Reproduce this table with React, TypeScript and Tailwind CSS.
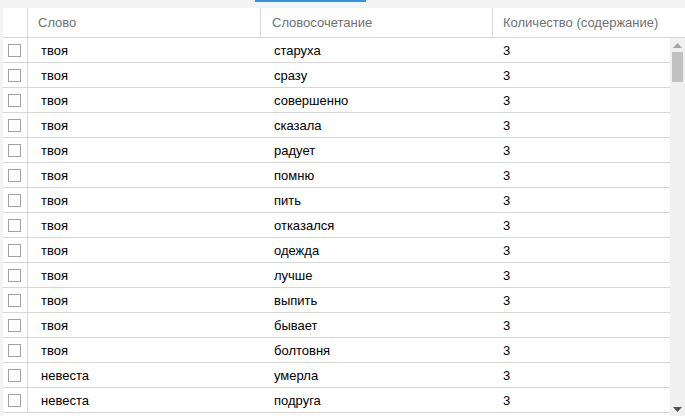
import React from "react";

const rows: [string, string, number][] = [
  ["твоя", "старуха", 3],
  ["твоя", "сразу", 3],
  ["твоя", "совершенно", 3],
  ["твоя", "сказала", 3],
  ["твоя", "радует", 3],
  ["твоя", "помню", 3],
  ["твоя", "пить", 3],
  ["твоя", "отказался", 3],
  ["твоя", "одежда", 3],
  ["твоя", "лучше", 3],
  ["твоя", "выпить", 3],
  ["твоя", "бывает", 3],
  ["твоя", "болтовня", 3],
  ["невеста", "умерла", 3],
  ["невеста", "подруга", 3],
];

const App = () => {
  return (
    <div
      className="w-[685px] h-[416px] overflow-hidden bg-[#f3f3f3] text-[13px]"
      style={{ fontFamily: '"Liberation Sans", Arial, sans-serif' }}
    >
      {/* tab indicator */}
      <div className="ml-[255px] w-[111px] h-[2px] bg-[#3a92dc]" />
      <div className="h-[6px]" />

      <div className="ml-[3px] bg-white">
        {/* header */}
        <div className="grid grid-cols-[24px_233px_232px_1fr] h-[30px] border-b border-[#d6d6d6] text-[#707070]">
          <div />
          <div className="border-l border-[#d6d6d6] pl-[10px] flex items-center">Слово</div>
          <div className="border-l border-[#d6d6d6] pl-[11px] flex items-center">Словосочетание</div>
          <div className="border-l border-[#d6d6d6] pl-[10px] flex items-center">Количество (содержание)</div>
        </div>

        <div className="flex">
          {/* body */}
          <div className="w-[667px] text-black">
            {rows.map(([word, phrase, count], i) => (
              <div
                key={i}
                className="grid grid-cols-[24px_233px_232px_1fr] h-[25px] border-b border-[#d6d6d6]"
              >
                <div className="flex items-center pl-[5px]">
                  <div className="w-[13px] h-[13px] border border-[#a0a0a0] bg-white" />
                </div>
                <div className="border-l border-[#d6d6d6] pl-[13px] pt-[2px] flex items-center">{word}</div>
                <div className="pl-[14px] pt-[2px] flex items-center">{phrase}</div>
                <div className="pl-[11px] pt-[2px] flex items-center">{count}</div>
              </div>
            ))}
          </div>

          {/* scrollbar */}
          <div className="w-[15px] h-[380px] bg-[#f0f0f0] flex flex-col items-center">
            <svg width="9" height="5" viewBox="0 0 9 5" className="mt-[5px]">
              <polygon points="4.5,0 9,5 0,5" fill="#a3a3a3" />
            </svg>
            <div className="mt-[4px] w-[11px] h-[30px] bg-[#c1c1c1]" />
            <div className="flex-1" />
            <svg width="9" height="5" viewBox="0 0 9 5" className="mb-[6px]">
              <polygon points="0,0 9,0 4.5,5" fill="#505050" />
            </svg>
          </div>
        </div>
      </div>
    </div>
  );
};

export default App;
